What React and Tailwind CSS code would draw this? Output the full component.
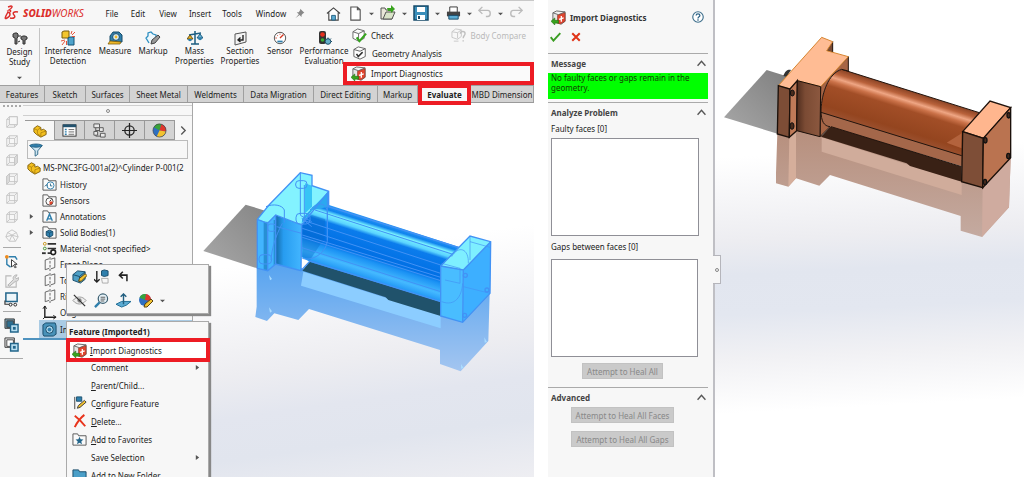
import React from "react";

function Icon({ size = 14, box = "0 0 16 16", children, className = "" }) {
  return (
    <svg width={size} height={size} viewBox={box} fill="none" aria-hidden="true" className={`shrink-0 ${className}`}>
      {children}
    </svg>
  );
}

/* ---------- icons ---------- */
const DesignStudy = () => (
  <Icon size={16}>
    <path d="M1 3l2-1h2l1 1v3L5 7v6H3V7L1 6zM9 6l2-1h2l2 1v2l-2 1v4h-2V9L9 8z" fill="#777" stroke="#333" />
    <path d="M6 5h3M8 10l-2 1" stroke="#333" />
  </Icon>
);
const Interference = () => (
  <Icon size={16}>
    <path d="M2 2l2-1h5v7H2z" fill="#f3c62d" stroke="#7b5c0b" />
    <path d="M8 8l2-1h4v8H8z" fill="#4fa3cb" stroke="#145274" />
    <path d="M11 4l1-3M12 5l3-3M12 6.500h3M5 10l-4 1M5 11l-3 4M6.500 11v4" stroke="#e5543c" />
  </Icon>
);
const Measure = () => (
  <Icon size={16}>
    <path d="M3 11V6l3-4h6l3 3v7z" fill="#2f7fac" stroke="#174b69" />
    <circle cx="9" cy="7" r="3.4" fill="#d8ecf5" stroke="#174b69" />
    <circle cx="9" cy="7" r="1.4" fill="#f0b928" />
    <path d="M1 14h12l1-2-11-1z" fill="#f0b928" stroke="#80600e" strokeWidth=".8" />
  </Icon>
);
const MarkupIcon = () => (
  <Icon size={16}>
    <path d="M4 13l-3-5 2-2V3l3-1 2 2 3 1v2" stroke="#2e8fc1" strokeWidth="1.3" fill="#edf7fc" />
    <path d="M6 14l1-4 6-5 2 2-5 6z" fill="#999" stroke="#444" />
  </Icon>
);
const Mass = () => (
  <Icon size={16}>
    <path d="M8 1v13M4 14h8M2 5l6-1 6-1" stroke="#1d5d81" strokeWidth="1.5" />
    <path d="M0 9h6L3 5z" fill="#e8b32a" stroke="#6c5210" />
    <path d="M10 8h6l-3-4z" fill="#6ab5da" stroke="#1d5d81" />
    <path d="M1 9c0 3 4 3 4 0M11 8c0 3 4 3 4 0" fill="#2f7fac" />
  </Icon>
);
const Section = () => (
  <Icon size={16}>
    <path d="M3 4l11-2v10L3 15z" fill="#f3f3f3" stroke="#555" />
    <path d="M6 10h5V5M8.500 7.500L6 10l2.500 2" stroke="#222" strokeWidth="1.400" />
  </Icon>
);
const Sensor = () => (
  <Icon size={14}>
    <circle cx="8" cy="8" r="6.500" fill="#fff" stroke="#444" />
    <path d="M8 8l4-4M3 8h1M8 3v1M5 5l.5.500" stroke="#d3341e" strokeWidth="1.500" />
    <path d="M5 11h6v2H5z" fill="#2f7fac" />
  </Icon>
);
const Performance = () => (
  <Icon size={16}>
    <rect x="3" y="1" width="7" height="13" rx="2" fill="#333" />
    <circle cx="6.500" cy="4.500" r="2.300" fill="#e5301e" />
    <circle cx="6.500" cy="10" r="1.800" fill="#38ae35" />
    <circle cx="12" cy="11.500" r="2.800" fill="#64aeca" stroke="#1c4f69" />
    <path d="M12 7.500v1.500M16 11.500h-1M15 8.500l-1 1" stroke="#1c4f69" />
  </Icon>
);
const Cube = ({ size = 14, color = "#c2c2c2", mode = 0 }) => (
  <Icon size={size}>
    {mode !== 6 && <path d="M5 2h9v9h-9zM2 5h9v9H2zM2 5l3-3M11 5l3-3M11 14l3-3M2 14l3-3" stroke={color} />}
    {mode === 0 && <path d="M5 2h9v9h-9z" fill="#f7f7f7" stroke={color} />}
    {mode === 2 && <path d="M11 5l3-3v9l-3 3z" fill="#ddd" stroke={color} />}
    {mode === 3 && <path d="M2 5l3-3v9l-3 3z" fill="#ddd" stroke={color} />}
    {mode === 6 && <path d="M8 1l5 3 2 5-3 5H5L1 9l2-5zM3 4l5 3 5-3M8 7l-3 7M8 7l4 7M1 9l7-2 7 2" stroke={color} />}
  </Icon>
);
const CheckCube = () => (
  <Icon size={15}>
    <path d="M1 4l5-3 7 2v8l-6 3-6-3zM1 4l6 2 6-3M7 6v8" fill="#fff" stroke="#666" />
    <path d="M5 10l3 4 7-8" stroke="#35a51d" strokeWidth="2.300" />
  </Icon>
);
const GeoCube = () => (
  <Icon size={14}>
    <path d="M1 4l5-3 8 2v9l-6 3-7-3zM1 4l7 2 6-3" fill="#fff" stroke="#555" />
    <path d="M4 9l2 3 5-5" stroke="#333" strokeWidth="1.800" />
  </Icon>
);
const CompareCube = () => (
  <Icon size={15}>
    <path d="M1 4l4-3 6 1v7l-4 3-6-2zM1 4l6 1 4-3M7 5v6M3 14h5" stroke="#c8c8c8" />
    <path d="M10 6c0-3 5-3 5 0 0 2-2 2-2 5M13 13v1.500" stroke="#c0c0c0" strokeWidth="1.500" />
  </Icon>
);
const ImportDiag = ({ size = 15 }) => (
  <Icon size={size}>
    <path d="M2 3l4-2 9 1v10l-4 3-9-3zM2 3l6 2 7-3" fill="#e6e6e6" stroke="#666" />
    <path d="M7 5.500l8-2.500v9l-5 3-3-1z" fill="#e2452f" stroke="#8c3a2c" strokeWidth=".7" />
    <path d="M11 6.500v6M8.500 10l5-1.500" stroke="#fff" strokeWidth="1.400" />
    <path d="M0 12l4-3.500V11h4v3H4v2z" fill="#38a31d" stroke="#1e6b10" strokeWidth=".6" />
  </Icon>
);
const Part = ({ size = 14 }) => (
  <Icon size={size}>
    <path d="M1 5l4-3 4 2v3l3-1 3 2v4l-6 3-5-3-3-3z" fill="#f3c01f" stroke="#7c5a08" />
    <path d="M1 5l4 2 4-3M5 7v4l4 3M9 10l6-2M9 10v4" stroke="#a3790d" strokeWidth=".8" />
  </Icon>
);
const PropIcon = () => (
  <Icon size={15}>
    <rect x="1" y="2" width="14" height="12" fill="#fff" stroke="#333" />
    <path d="M1 3h14" stroke="#22526e" strokeWidth="3" />
    <path d="M3 7h2M3 9.500h2M3 12h2" stroke="#2f7fac" strokeWidth="1.500" />
    <path d="M7 7h6M7 9.500h6M7 12h6" stroke="#666" />
  </Icon>
);
const ConfigIcon = () => (
  <Icon size={15}>
    <path d="M4 2v12h6M4 8h5" stroke="#555" />
    <path d="M2 1h6v4H2zM8 5h4v4H8zM9 11h5v4H9zM2 9h4v4H2z" fill="#e9e9e9" stroke="#555" />
  </Icon>
);
const Target = () => (
  <Icon size={15}>
    <circle cx="8" cy="8" r="5" stroke="#222" strokeWidth="1.300" />
    <path d="M8 0v16M0 8h16" stroke="#222" strokeWidth="1.300" />
  </Icon>
);
const Ball = ({ size = 15 }) => (
  <Icon size={size}>
    <circle cx="8" cy="8" r="7" fill="#2f6fc0" />
    <path d="M8 8L2 4.500A7 7 0 0 1 10 1.300z" fill="#3aa33a" />
    <path d="M8 8l2-6.700A7 7 0 0 1 14.800 9z" fill="#e0362a" />
    <path d="M8 8l6.800 1A7 7 0 0 1 5 14.300z" fill="#f2c230" />
    <circle cx="8" cy="8" r="7" stroke="#444" strokeWidth=".7" />
  </Icon>
);
const Funnel = () => (
  <Icon size={14}>
    <path d="M1 3l6 6v6l3-2V9l5-6z" fill="#cfe6f2" stroke="#235f80" />
    <ellipse cx="8" cy="3" rx="7" ry="1.800" fill="#2f7fac" stroke="#235f80" />
  </Icon>
);
const FolderBox = ({ children }) => (
  <Icon size={15}>
    <path d="M1 2h5l1 2h8v10H1z" fill="#fafafa" stroke="#555" />
    {children}
  </Icon>
);
const HistoryIcon = () => (
  <FolderBox>
    <circle cx="9" cy="9" r="3.800" fill="#fff" stroke="#2f7fac" />
    <path d="M9 7v2.500h2M3 10l2-2 1 2" stroke="#2f6b8b" />
  </FolderBox>
);
const SensorsIcon = () => (
  <FolderBox>
    <circle cx="8" cy="9" r="3.800" fill="#fff" stroke="#444" />
    <path d="M8 9l2-2" stroke="#222" />
    <path d="M8 9h3.500A3.500 3.500 0 0 1 8 12.500z" fill="#e0442a" />
  </FolderBox>
);
const AnnotIcon = () => (
  <FolderBox>
    <path d="M5 12.500L8 5.500l3 7M6 10.500h4" stroke="#2f7fac" strokeWidth="1.500" />
  </FolderBox>
);
const SolidIcon = () => (
  <FolderBox>
    <path d="M4.500 7L8 5.500 11.500 7v4L8 13l-3.500-2z" fill="#2f7fac" stroke="#174b69" />
    <path d="M4.500 7L8 8.500 11.500 7M8 8.500V13" stroke="#174b69" strokeWidth=".7" />
  </FolderBox>
);
const MaterialIcon = () => (
  <Icon size={15}>
    <circle cx="3" cy="3" r="1.500" stroke="#c89415" />
    <circle cx="3" cy="8" r="1.500" stroke="#3f8a2a" />
    <path d="M0 13h4" stroke="#333" strokeWidth="2" />
    <path d="M6 3h9M6 8h9M6 13h4" stroke="#333" strokeWidth="1.800" />
    <circle cx="12" cy="12" r="2.500" fill="#fff" stroke="#222" strokeWidth="1.700" />
  </Icon>
);
const PlaneIcon = () => (
  <Icon size={14}>
    <path d="M7 2L2.500 3.500v11L7 13M9 2.500L13.500 1v11L9 13.500" stroke="#555" />
    <path d="M8 0v16" stroke="#555" strokeDasharray="3 1.500" />
  </Icon>
);
const OriginIcon = () => (
  <Icon size={15}>
    <path d="M3 1v12h12" stroke="#222" strokeWidth="1.500" />
    <path d="M1 4l2-3 2 3M12 11l3 2-3 2M1 15l2-2" stroke="#222" />
  </Icon>
);
const ImportedIcon = () => (
  <Icon size={15}>
    <path d="M1 3l3-2h10l1 3v9l-3 2H2l-1-2z" fill="#4892b9" stroke="#174b69" />
    <circle cx="8" cy="8" r="4" fill="#a8d4ea" stroke="#174b69" />
    <circle cx="8" cy="8" r="2" fill="#2f7fac" />
  </Icon>
);
const SketchTool = () => (
  <Icon size={15}>
    <path d="M3 4v7l4 3M5 3h7l2 3" stroke="#2f7fac" strokeWidth="1.500" />
    <circle cx="3" cy="3" r="2" fill="#ef8b1d" />
    <path d="M8 6v8l2-2 2 3 1-1-2-3h3z" fill="#fff" stroke="#333" />
  </Icon>
);
const GreyTool = () => (
  <Icon size={15}>
    <path d="M13 9v6H2V3h6" stroke="#b9b9b9" strokeWidth="1.200" />
    <path d="M4 13l6-6c-1-3 1-5 4-5l-2 3 1 1 3-1c0 3-2 4-4 4l-6 5z" fill="#ddd" stroke="#b0b0b0" />
  </Icon>
);
const ViewTool = () => (
  <Icon size={15}>
    <path d="M2 1h12v9H2z" fill="#eef6fa" stroke="#23668b" strokeWidth="1.600" />
    <path d="M1 9v4h8" stroke="#333" strokeWidth="1.200" />
    <circle cx="7" cy="13.500" r="1.500" fill="#fff" stroke="#222" />
    <circle cx="12" cy="13.500" r="1.500" fill="#fff" stroke="#222" />
  </Icon>
);
const StackTool = ({ hollow }) => (
  <Icon size={15}>
    <path d="M1 1h10v10H1z" fill={hollow ? "#eee" : "#7fa6b8"} stroke="#333" />
    <path d="M3 3h7v7H3z" fill={hollow ? "#fff" : "#2f6f90"} stroke="#444" />
    <path d="M7 7h8v8H7z" fill="#b9dff1" stroke="#22658a" strokeWidth="1.500" />
    <path d="M9.500 9.500h3v3h-3z" fill="#22658a" />
  </Icon>
);
const EditFeature = () => (
  <Icon size={15}>
    <path d="M1 6l5-4 8 1v8l-5 4-8-3z" fill="#4e9fc6" stroke="#174b69" />
    <path d="M1 6l7 2 6-5M8 8v6" stroke="#174b69" />
    <path d="M7 13l1-3 6-5 2 2-6 6z" fill="#f2c230" stroke="#584211" />
  </Icon>
);
const Suppress = () => (
  <Icon size={15}>
    <path d="M3 2v12M0 11l3 3 3-3" stroke="#222" strokeWidth="1.500" />
    <path d="M8 2l3-1 4 1v5l-4 1-3-1z" fill="#2f7fac" stroke="#174b69" />
    <path d="M8 10h7v5H9z" stroke="#aaa" />
  </Icon>
);
const Rollback = () => (
  <Icon size={11}>
    <path d="M13 15V6H3M7 1L2 6l5 5" stroke="#222" strokeWidth="2.200" />
  </Icon>
);
const Hide = () => (
  <Icon size={15}>
    <path d="M1 8c4-5 10-5 14 0-4 5-10 5-14 0z" stroke="#999" fill="#eee" />
    <circle cx="8" cy="8" r="2.300" fill="#888" />
    <path d="M2 2l12 12" stroke="#333" strokeWidth="1.300" />
  </Icon>
);
const ZoomSel = () => (
  <Icon size={15}>
    <path d="M1 15l5-5" stroke="#2f7fac" strokeWidth="2.500" />
    <circle cx="9.500" cy="6" r="5" fill="#e8f4fa" stroke="#3b5e70" strokeWidth="1.300" />
    <path d="M7 4.500h5M7 6.500h5M7 8.500h4" stroke="#555" />
  </Icon>
);
const NormalTo = () => (
  <Icon size={15}>
    <path d="M0 12l6-3h10l-5 4-5 2z" fill="#5cacd3" stroke="#1d6a92" />
    <path d="M8 12V1M5 4l3-3 3 3" stroke="#235f80" strokeWidth="1.500" />
  </Icon>
);
const Appearance = () => (
  <Icon size={16}>
    <circle cx="7" cy="7" r="6" fill="#2f6fc0" />
    <path d="M7 7L1.500 4.500A6 6 0 0 1 8 1z" fill="#3aa33a" />
    <path d="M7 7l1-6a6 6 0 0 1 5 7z" fill="#e0362a" />
    <path d="M6 14l1-3 6-5 2 2-6 6z" fill="#f2c230" stroke="#584211" />
  </Icon>
);
const ConfigureFeature = () => (
  <Icon size={14}>
    <path d="M2 1v14" stroke="#333" />
    <path d="M4 1h6v5H4z" fill="#2f7fac" stroke="#174b69" />
    <path d="M5 14l1-3 7-6 2 2-7 6z" fill="#f2c230" stroke="#333" />
  </Icon>
);
const DeleteIcon = () => (
  <Icon size={14}>
    <path d="M2 2c4 3 8 7 12 12M13 1C9 4 5 9 2 15" stroke="#e8341c" strokeWidth="2.200" />
  </Icon>
);
const Favorite = () => (
  <FolderBox>
    <path d="M8 5l1.200 2.800 3 .2-2.300 2 .8 3L8 11.500 5.300 13l.8-3-2.300-2 3-.2z" fill="#23668b" />
  </FolderBox>
);
const NewFolder = () => (
  <Icon size={15}>
    <path d="M1 2h6l1 2h7v11H1z" fill="#4b9fc8" stroke="#174b69" />
  </Icon>
);
const Chevron = ({ dir = "up", size = 9 }) => (
  <Icon size={size}>
    <path d={dir === "up" ? "M1 12l7-8 7 8" : "M4 1l7 7-7 7"} stroke="#555" strokeWidth="2.400" />
  </Icon>
);
const Caret = ({ dir = "down" }) => (
  <svg width="5" height="5" viewBox="0 0 6 6" aria-hidden="true" className="shrink-0">
    <path d={dir === "down" ? "M0 2h6L3 5z" : "M1 0v6l4-3z"} fill="#555" />
  </svg>
);

/* ---------- model drawings ---------- */
function BlueModel() {
  return (
    <svg width="310" height="220" viewBox="0 0 930 660" className="shrink-0" role="img" aria-label="Imported cylinder, selected">
      <defs>
        <linearGradient id="bShadow" x1="1" y1="0" x2="0" y2="1">
          <stop offset="0" stopColor="#868686" />
          <stop offset="1" stopColor="#a8a8a8" />
        </linearGradient>
        <linearGradient id="bRef" x1="0" y1="0" x2="0" y2="1">
          <stop offset="0" stopColor="#55a3f0" />
          <stop offset="1" stopColor="#a3c5f0" />
        </linearGradient>
        <linearGradient id="bBody" gradientUnits="userSpaceOnUse" x1="590" y1="190" x2="535" y2="365">
          <stop offset="0" stopColor="#2e9df5" />
          <stop offset=".1" stopColor="#0f83ee" />
          <stop offset=".16" stopColor="#78f0ff" />
          <stop offset=".24" stopColor="#5bd4ff" />
          <stop offset=".3" stopColor="#0b7cec" />
          <stop offset=".62" stopColor="#006fe4" />
          <stop offset=".7" stopColor="#1b92f4" />
          <stop offset=".86" stopColor="#45b9ff" />
          <stop offset="1" stopColor="#1c93f4" />
        </linearGradient>
        <linearGradient id="bFront" x1="0" y1="0" x2="1" y2="0">
          <stop offset="0" stopColor="#156aa8" />
          <stop offset=".3" stopColor="#279cf0" />
          <stop offset="1" stopColor="#43b6ff" />
        </linearGradient>
      </defs>
      <path d="M25 273L152 134L210 152L187 325z" fill="url(#bShadow)" />
      <path d="M185 325V440L181 471L216 483L238 460L310 480L342 447L735 570V612L797 634L880 543L884 400L800 480L735 465L320 325L242 305z" fill="url(#bRef)" />
      <path d="M325 335L737 466V505L318 377z" fill="#8ccdff" />
      <path d="M322 332L345 303L737 425V468L580 420L572 412z" fill="#20526b" />
      <path d="M318 180L360 135L402 135L795 262L737 425L345 306L318 290z" fill="url(#bBody)" />
      <path d="M350 165L390 178L388 235L345 300L322 290V195z" fill="#0869c9" opacity=".4" />
      <path d="M187 178L222 135L316 38L351 46V77L401 94V128L350 152L318 195L245 165L218 190z" fill="#83f3ff" />
      <path d="M187 178L218 188L242 165V312L218 332L187 325z" fill="#42b5ff" />
      <path d="M242 165L320 195L318 332L242 312z" fill="url(#bFront)" />
      <path d="M401 94V140L352 150L320 190L322 175z" fill="#2ba8f0" />
      <path d="M330 70L351 77V140L330 160z" fill="#37c4f5" />
      <path d="M206 185H218V330H206zM236 180H245V315H236z" fill="#1577b7" opacity=".6" />
      <g stroke="#4292f5" strokeWidth="3" fill="none">
        <path d="M187 178L222 135L316 38L351 46V77L401 94V140L795 264M187 178V325L218 332L242 312L318 332L345 303L737 425M218 190V332M242 165V312M320 195L318 332M187 178L218 190L242 165L320 195L401 94" strokeWidth="4" />
        <path d="M322 180L737 315M322 205L737 340M322 225L737 352M322 232L737 362M318 262L737 395M360 150L780 285" />
        <path d="M345 150C370 120 400 130 397 165V240C395 280 350 305 322 295M262 190C240 230 230 270 228 300M213 140C235 130 262 135 268 150V188M316 38V165M328 75V185M397 100V240" />
        <rect x="302" y="62" width="34" height="23" rx="10" />
        <rect x="303" y="160" width="42" height="32" rx="12" />
        <rect x="192" y="284" width="38" height="28" rx="12" />
        <rect x="218" y="192" width="24" height="22" rx="8" />
        <path d="M316 166L350 185M320 175L350 200M245 200L320 220" />
      </g>
      <path d="M737 318L825 228L887 245L805 330z" fill="#7eefff" />
      <path d="M737 318L805 330L803 487L737 468z" fill="#49bdff" />
      <path d="M805 330L887 245L885 400L803 487z" fill="#3dafff" />
      <g stroke="#4292f5" strokeWidth="4" fill="none">
        <path d="M737 318L825 228L887 245L885 400L803 487L737 468zM737 318L805 330L887 245M805 330L803 487" />
        <path d="M825 228V300M770 290C790 255 822 265 820 310M740 425C780 440 800 410 803 370M740 310L795 325V370L750 360M825 245L885 262M805 380L885 400" strokeWidth="2" />
        <circle cx="811" cy="346" r="6" />
        <circle cx="876" cy="390" r="6" />
        <circle cx="809" cy="466" r="6" />
      </g>
      <path d="M222 345l9 12-6 4zM222 442l9 12-6 4zM868 532l8 14-7 2zM798 612l8 12-8 2z" fill="#a9dcff" />
    </svg>
  );
}

function CopperModel() {
  return (
    <svg width="304" height="220" viewBox="0 0 912 660" className="shrink-0" role="img" aria-label="Cylinder assembly">
      <defs>
        <linearGradient id="cShadow" x1="1" y1="0" x2="0" y2="1">
          <stop offset="0" stopColor="#7f7f7f" />
          <stop offset="1" stopColor="#a8a8a8" />
        </linearGradient>
        <linearGradient id="cRef" x1="0" y1="0" x2="0" y2="1">
          <stop offset="0" stopColor="#b78f7d" />
          <stop offset="1" stopColor="#c4aaa0" />
        </linearGradient>
        <linearGradient id="cBody" gradientUnits="userSpaceOnUse" x1="575" y1="185" x2="525" y2="345">
          <stop offset="0" stopColor="#8d4526" />
          <stop offset=".1" stopColor="#b9623b" />
          <stop offset=".18" stopColor="#efa684" />
          <stop offset=".25" stopColor="#cb7249" />
          <stop offset=".34" stopColor="#a24e27" />
          <stop offset=".7" stopColor="#94451f" />
          <stop offset=".86" stopColor="#9c5231" />
          <stop offset="1" stopColor="#b36e4d" />
        </linearGradient>
        <linearGradient id="cFront" x1="0" y1="0" x2="1" y2="0">
          <stop offset="0" stopColor="#4f2d1e" />
          <stop offset=".35" stopColor="#7b4b34" />
          <stop offset="1" stopColor="#8c583f" />
        </linearGradient>
      </defs>
      <path d="M12 262L140 120L205 140L175 312z" fill="url(#cShadow)" />
      <path d="M172 310L168 430V460L205 470L228 445L298 467L330 435L722 558V602L786 621L867 532L872 380L788 470L725 450L305 315L230 300z" fill="url(#cRef)" />
      <path d="M305 322L725 455V495L305 365z" fill="#d0ac9b" />
      <path d="M208 322L228 308V445L205 470z" fill="#d5ae9b" />
      <path d="M788 473L872 385L867 532L786 621z" fill="#cfab9f" />
      <path d="M303 320L333 288L725 410V455L570 408L560 400z" fill="#392115" />
      <path d="M190 138C195 122 205 117 213 120L200 140z" fill="#333" />
      <path d="M365 118L778 248L725 408L333 290C305 288 300 270 303 240C305 190 325 130 365 118z" fill="url(#cBody)" />
      <path d="M303 247L725 377V408L333 290C312 288 303 275 303 247z" fill="#a4674a" />
      <path d="M725 310V355L680 338z" fill="#b3633d" />
      <path d="M365 118L778 248M303 247L725 377M333 290L725 410" stroke="#22140d" strokeWidth="3" fill="none" />
      <path d="M302 170L385 80V123L365 118C325 130 305 190 303 240C303 275 312 288 330 290L300 320z" fill="#a76545" stroke="#22140d" strokeWidth="3" />
      <path d="M320 62L338 35V66z" fill="#7b4b34" stroke="#22140d" strokeWidth="3" />
      <path d="M175 167L305 22L338 35L320 62L385 80L302 170L232 152L210 177z" fill="#ffbc94" stroke="#d78631" strokeWidth="3" />
      <path d="M175 167L210 177L208 322L172 312z" fill="#7d4d36" stroke="#1b100a" strokeWidth="4" />
      <path d="M210 177L232 152L230 302L208 322z" fill="#bf7a58" stroke="#1b100a" strokeWidth="4" />
      <path d="M232 152L302 170L300 320L230 302z" fill="url(#cFront)" stroke="#1b100a" strokeWidth="3" />
      <ellipse cx="217" cy="189" rx="6" ry="9" fill="#4a2b1c" stroke="#111" strokeWidth="3" />
      <ellipse cx="216" cy="288" rx="6" ry="10" fill="#4a2b1c" stroke="#111" strokeWidth="3" />
      <path d="M728 305L810 213L872 233L790 325z" fill="#ffb68e" stroke="#22140d" strokeWidth="4" />
      <path d="M728 305L790 325L788 473L725 455z" fill="#7e4e37" stroke="#1b100a" strokeWidth="4" />
      <path d="M790 325L872 233V383L788 473z" fill="#ba7350" stroke="#1b100a" strokeWidth="4" />
      <g fill="#4a2b1c" stroke="#111" strokeWidth="4">
        <ellipse cx="866" cy="256" rx="5" ry="8" />
        <ellipse cx="796" cy="331" rx="5" ry="8" />
        <ellipse cx="865" cy="378" rx="5" ry="8" />
        <ellipse cx="795" cy="456" rx="5" ry="8" />
      </g>
    </svg>
  );
}

/* ---------- left window ---------- */
const iconButton = "flex items-center justify-center";

function MenuBar() {
  return (
    <header className="flex h-[26px] shrink-0 items-center border-b border-t border-[#c8c8c8]">
      <div className="flex w-[100px] shrink-0 items-center gap-1 pl-1 text-[#dc2f2c]">
        <svg width="15" height="16" viewBox="0 0 15 16" fill="none" stroke="#dc2f2c" aria-hidden="true">
          <path d="M4 2l3-1c2 0 1 2-2 4 2 0 2 1 1 2M4 7C0 14 1 14 3 13c4-2 4-6 0-6M14 7c-4-1-6 1-4 3s0 4-4 3" strokeWidth="1.500" />
        </svg>
        <span className="text-[10px] italic leading-none">
          <b className="font-extrabold">SOLID</b>WORKS
        </span>
      </div>
      <nav className="flex shrink-0 items-center text-center">
        {[
          ["File", "w-6"],
          ["Edit", "w-7"],
          ["View", "w-8"],
          ["Insert", "w-8"],
          ["Tools", "w-8"],
          ["Window", "w-[46px]"],
        ].map(([t, w]) => (
          <button key={t} className={`${w} text-center`}>{t}</button>
        ))}
      </nav>
      <button aria-label="Pin" className="w-3">
        <Icon size={11}>
          <path d="M9 1l6 6-2 1-2 2v3l-3-3-6 5 5-6-3-3h3l2-3z" fill="#888" />
        </Icon>
      </button>
      <div className="ml-5 flex min-w-0 items-center gap-[6px] overflow-hidden">
        <button aria-label="Home" className="mr-px">
          <Icon size={15}>
            <path d="M1 8l7-6 7 6M3 7v8h10V7" fill="#fff" stroke="#444" strokeWidth="1.200" />
            <path d="M6 15v-5h4v5z" fill="#5cacd3" stroke="#235f80" />
          </Icon>
        </button>
        <button aria-label="New" className="flex items-center gap-[6px]">
          <Icon size={15}><path d="M3 1h7l3 3v11H3zM10 1v3h3" fill="#fff" stroke="#555" strokeWidth="1.200" /></Icon>
          <Caret />
        </button>
        <button aria-label="Open" className="flex items-center gap-[6px]">
          <Icon size={16}>
            <path d="M1 3h4l1 2h6v9H1z" fill="#e9e6d8" stroke="#555" />
            <path d="M3 14l3-7h9l-3 7z" fill="#d9e3c8" stroke="#555" />
            <path d="M7 3h4V0l4 4-4 4V6H8z" fill="#38a31d" />
          </Icon>
          <Caret />
        </button>
        <button aria-label="Save" className="flex items-center gap-[6px]">
          <Icon size={16}>
            <path d="M1 1h14v14H1z" fill="#3a8fbb" stroke="#174b69" strokeWidth="1.500" />
            <path d="M4 2h8v5H4zM4 10h8v5H4z" fill="#fff" />
            <path d="M5 11h2v3H5z" fill="#174b69" />
          </Icon>
          <Caret />
        </button>
        <button aria-label="Print" className="flex items-center gap-[6px]">
          <Icon size={15}>
            <path d="M4 1h8v6H4z" fill="#fff" stroke="#333" />
            <path d="M1 6h14v5H1z" fill="#444" />
            <path d="M3 10h10v4H3z" fill="#5cacd3" stroke="#174b69" />
          </Icon>
          <Caret />
        </button>
        <button aria-label="Undo" className="flex items-center gap-[6px]">
          <Icon size={14}><path d="M1 5h10c4 0 4 7 0 7H9M5 1L1 5l4 4" stroke="#bbb" strokeWidth="1.600" /></Icon>
          <Caret />
        </button>
        <button aria-label="Redo">
          <Icon size={14}><path d="M15 5H5c-4 0-4 7 0 7h2M11 1l4 4-4 4" stroke="#bbb" strokeWidth="1.600" /></Icon>
        </button>
      </div>
    </header>
  );
}

const ribbon = [
  ["Interference", "Detection", Interference, "w-14"],
  ["Measure", "", Measure, "w-[38px]"],
  ["Markup", "", MarkupIcon, "w-[38px]"],
  ["Mass", "Properties", Mass, "w-[45px]"],
  ["Section", "Properties", Section, "w-[46px]"],
  ["Sensor", "", Sensor, "w-[34px]"],
  ["Performance", "Evaluation", Performance, "w-[54px]"],
];

function Ribbon() {
  return (
    <section className="flex h-[59px] shrink-0 pt-[2px]">
      <button className="flex w-10 shrink-0 flex-col items-center border-r border-[#c4c4c4] pt-[3px] leading-[10px]">
        <DesignStudy />
        <span>Design<br />Study</span>
        <span className="mt-2"><Caret /></span>
      </button>
      {ribbon.map(([a, b, I, w]) => (
        <button key={a} className={`${w} flex shrink-0 flex-col items-center pt-[2px] leading-[10px]`}>
          <span className="flex h-4 items-center"><I /></span>
          <span className="text-center">{a}{b && <><br />{b}</>}</span>
        </button>
      ))}
      <div className="flex min-w-0 flex-1 flex-col">
        <div className="flex h-4 items-center justify-between gap-2">
          <button className="flex items-center gap-1 pl-px"><CheckCube />Check</button>
          <button disabled className="flex items-center gap-1 pr-2 text-[#b9b9b9]"><CompareCube />Body Compare</button>
        </div>
        <button className="flex h-[21px] items-center gap-[5px] pl-[2px]"><GeoCube />Geometry Analysis</button>
        <button className="z-10 -ml-2 -mt-px flex h-[23px] shrink-0 items-center gap-[5px] border-4 border-[#ed1c24] bg-[#fafafa] pl-1">
          <ImportDiag />Import Diagnostics
        </button>
      </div>
    </section>
  );
}

const tabs = [
  ["Features", "w-[45px]"],
  ["Sketch", "w-[41px]"],
  ["Surfaces", "w-11"],
  ["Sheet Metal", "w-[58px]"],
  ["Weldments", "w-14"],
  ["Data Migration", "w-[70px]"],
  ["Direct Editing", "w-16"],
  ["Markup", "w-10"],
  ["Evaluate", "w-[53px]"],
  ["MBD Dimension", "w-[63px]"],
];

function TabBar() {
  return (
    <nav className="flex h-[18px] shrink-0 border-b border-[#9a9a9a] bg-[#d3d3d3]">
      <div className="flex min-w-0 flex-1">
        {tabs.map(([t, w]) =>
          t === "Evaluate" ? (
            <button key={t} className={`${w} z-10 -mt-px h-[21px] shrink-0 border-4 border-[#ed1c24] bg-[#f7f7f7] font-bold leading-[13px]`}>{t}</button>
          ) : (
            <button key={t} className={`${w} shrink-0 whitespace-nowrap border-r border-t border-[#9f9f9f] text-center`}>{t}</button>
          )
        )}
      </div>
    </nav>
  );
}

function SideTools() {
  return (
    <aside className="flex w-[23px] shrink-0 flex-col items-center">
      <div className="mt-[2px] w-[18px] border-t-2 border-dotted border-[#aaa]" />
      <div className="mt-[5px] flex flex-col">
        {[0, 1, 2, 3, 4, 5, 6].map((m) => (
          <button key={m} aria-label={`View orientation ${m + 1}`} className="flex h-[19px] items-center"><Cube mode={m} /></button>
        ))}
      </div>
      <hr className="mb-1 mt-[2px] w-[18px] border-[#aaa]" />
      <button aria-label="Sketch" className="flex h-[19px] items-center"><SketchTool /></button>
      <button aria-label="Repair" className="flex h-[19px] items-center"><GreyTool /></button>
      <button aria-label="View" className="flex h-[19px] items-center"><ViewTool /></button>
      <hr className="mb-1 mt-[2px] w-[18px] border-[#aaa]" />
      <button aria-label="Front stack" className="flex h-[19px] items-center"><StackTool /></button>
      <button aria-label="Back stack" className="flex h-[19px] items-center"><StackTool hollow /></button>
      <hr className="mt-1 w-full border-[#aaa]" />
    </aside>
  );
}

const tree = [
  ["History", HistoryIcon],
  ["Sensors", SensorsIcon],
  ["Annotations", AnnotIcon, true],
  ["Solid Bodies(1)", SolidIcon, true],
  ["Material <not specified>", MaterialIcon],
  ["Front Plane", PlaneIcon],
  ["Top Plane", PlaneIcon],
  ["Right Plane", PlaneIcon],
  ["Origin", OriginIcon],
];

function FeatureTree() {
  return (
    <aside className="flex w-[170px] shrink-0 flex-col border-r border-[#a8a8a8]">
      <div className="mt-[2px] flex h-[11px] items-center justify-center border-b border-t border-[#cfcfcf]">
        <span className="size-1 rounded-full border border-[#888]" />
      </div>
      <div className="mt-1 flex h-5 pl-[2px]">
        {[Part, PropIcon, ConfigIcon, Target, Ball].map((I, i) => (
          <button key={i} aria-label={`Manager tab ${i + 1}`} className={`${iconButton} w-[30px] border-r border-t border-[#999] ${i ? "border-b bg-[#d3d3d3]" : "bg-[#f7f7f7]"}`}>
            <I />
          </button>
        ))}
        <button aria-label="More tabs" className={`${iconButton} flex-1`}><Chevron dir="right" /></button>
      </div>
      <button aria-label="Filter" className="mx-1 flex h-[19px] items-center border border-[#bbb] pl-px"><Funnel /></button>
      <div className="flex h-[17px] items-center gap-[2px] whitespace-nowrap pl-1">
        <Part />MS-PNC3FG-001a(2)^Cylinder P-001(2
      </div>
      <ul>
        {tree.map(([t, I, open]) => (
          <li key={t} className="flex h-4 items-center gap-[3px] pl-[6px]">
            <span className="w-[10px]">{open && <Caret dir="right" />}</span>
            <span className="flex w-[15px] justify-center"><I /></span>
            {t}
          </li>
        ))}
        <li className="flex h-5 items-center gap-[3px] border-b-2 border-[#4f93bf] pl-[16px]">
          <span className="flex h-full flex-1 items-center gap-[3px] bg-[#a9cbe4] pl-[3px]"><ImportedIcon />Imported1</span>
        </li>
      </ul>
    </aside>
  );
}

const menu = [
  [<>Comment</>, null, true, "comment"],
  [<><u>P</u>arent/Child...</>, null, false, "parent"],
  [<>C<u>o</u>nfigure Feature</>, ConfigureFeature, false, "configure"],
  [<><u>D</u>elete...</>, DeleteIcon, false, "delete"],
  [<><u>A</u>dd to Favorites</>, Favorite, false, "favorites"],
  [<>Save Selection</>, null, true, "save"],
  [<><u>A</u>dd to New Folder</>, NewFolder, false, "folder"],
];

function ContextMenus() {
  return (
    <>
      <div className="absolute left-[66px] top-[161px] flex h-[50px] w-[143px] flex-col justify-around border border-[#aaa] bg-[#f7f7f7] pl-[5px] shadow-[2px_2px_1px_#888]">
        <div className="flex items-center gap-[7px]">
          <button aria-label="Edit feature"><EditFeature /></button>
          <button aria-label="Suppress"><Suppress /></button>
          <button aria-label="Roll back" className="pl-[2px]"><Rollback /></button>
        </div>
        <div className="flex items-center gap-[7px]">
          <button aria-label="Hide"><Hide /></button>
          <button aria-label="Zoom to selection"><ZoomSel /></button>
          <button aria-label="Normal to"><NormalTo /></button>
          <button aria-label="Appearances" className="flex items-center gap-[6px]"><Appearance /><Caret /></button>
        </div>
      </div>
      <div className="absolute left-[66px] top-[218px] w-[143px] border border-[#aaa] bg-[#f7f7f7] shadow-[2px_2px_1px_#888]">
        <div className="h-4 pl-[2px] pt-1 font-bold">Feature (Imported1)</div>
        <button className="relative -mx-px -mb-1 flex h-6 w-[144px] items-center gap-[3px] border-4 border-[#ed1c24] bg-white pl-[2px]">
          <ImportDiag /><span><u>I</u>mport Diagnostics</span>
        </button>
        {menu.map(([label, I, sub, key]) => (
          <button key={key} className="flex h-[18px] w-full items-center gap-1 pl-[5px] pr-2">
            <span className="flex w-[15px] justify-center">{I && <I />}</span>
            <span className="flex-1 text-left">{label}</span>
            {sub && <Caret dir="right" />}
          </button>
        ))}
      </div>
    </>
  );
}

function ModelWindow() {
  return (
    <main className="flex min-w-0 flex-col overflow-hidden bg-[#f7f7f7]">
      <MenuBar />
      <Ribbon />
      <TabBar />
      <div className="relative flex min-h-0 flex-1">
        <SideTools />
        <FeatureTree />
        <div className="min-w-0 flex-1 overflow-hidden bg-[linear-gradient(172deg,#fff_40%,#ededf1_66%,#e3e6ef_76%,#e1e5ee_86%,#eeeef2_100%)] pl-[2px] pt-[57px]">
          <BlueModel />
        </div>
        <ContextMenus />
      </div>
    </main>
  );
}

/* ---------- right window ---------- */
function Heading({ children }) {
  return (
    <div className="flex h-5 items-center justify-between border-t border-[#aaa] pl-[3px] pr-[2px] font-bold text-[#444]">
      {children}
      <button aria-label="Collapse"><Chevron /></button>
    </div>
  );
}
const healButton = "block h-4 border border-[#c2c2c2] bg-[#cacaca] text-[#888]";
const listBox = "mx-[3px] block appearance-none overflow-hidden border border-[#8f8f96] bg-white";

function DiagnosticsPanel() {
  return (
    <section className="relative flex w-[167px] shrink-0 flex-col border-r-2 border-[#bfbfc4] bg-[#f7f7f7] pr-[5px]">
      <div className="flex h-[25px] items-end gap-1 pl-[3px]">
        <ImportDiag />
        <h1 className="flex-1 font-bold leading-[14px] text-[#333]">Import Diagnostics</h1>
        <button aria-label="Help" className="mb-[2px] mr-1">
          <Icon size={12}>
            <circle cx="8" cy="8" r="7" fill="#fff" stroke="#3e6f8c" strokeWidth="1.500" />
            <path d="M5.500 6c0-3 5-3 5 0 0 2-2.500 1.500-2.500 4M8 11v2" stroke="#2c6286" strokeWidth="1.700" />
          </Icon>
        </button>
      </div>
      <div className="flex h-7 items-center gap-[10px] pb-[5px] pl-[2px]">
        <button aria-label="OK"><Icon size={11}><path d="M1 9l4 5L15 3" stroke="#3a9d22" strokeWidth="2.800" /></Icon></button>
        <button aria-label="Cancel"><Icon size={10}><path d="M2 2l12 12M14 2L2 14" stroke="#e03418" strokeWidth="3.200" /></Icon></button>
      </div>
      <Heading>Message</Heading>
      <p className="mb-[3px] h-[26px] bg-[#00ff00] px-[3px] leading-[10px] text-[#123b00]">No faulty faces or gaps remain in the geometry.</p>
      <Heading>Analyze Problem</Heading>
      <label htmlFor="faulty" className="pl-[3px] leading-[13px]">Faulty faces [0]</label>
      <select id="faulty" multiple className={`${listBox} mt-[3px] h-[98px] w-[148px]`} />
      <label htmlFor="gaps" className="mt-1 pl-[3px] leading-[13px]">Gaps between faces [0]</label>
      <select id="gaps" multiple className={`${listBox} mt-[6px] h-[98px] w-[147px]`} />
      <button disabled className={`${healButton} mb-2 ml-[34px] mt-[6px] w-[81px]`}>Attempt to Heal All</button>
      <Heading>Advanced</Heading>
      <button disabled className={`${healButton} ml-[23px] w-[103px]`}>Attempt to Heal All Faces</button>
      <button disabled className={`${healButton} ml-[23px] mt-2 w-[103px]`}>Attempt to Heal All Gaps</button>
      <button aria-label="Resize panel" className="absolute -right-2 top-[255px] flex h-[29px] w-2 items-center justify-center border border-l-0 border-[#b5b5bb] bg-[#f7f7f7]">
        <span className="size-1 rounded-full border border-[#888]" />
      </button>
    </section>
  );
}

export default function App() {
  return (
    <div className="grid h-screen grid-cols-[534fr_14fr_476fr] overflow-hidden bg-white font-['Noto_Sans','Open_Sans',sans-serif] text-[8px] leading-[11px] text-[#222]">
      <ModelWindow />
      <div />
      <div className="flex min-w-0 overflow-hidden">
        <DiagnosticsPanel />
        <div className="min-w-0 flex-1 bg-[linear-gradient(177deg,#fff_32%,#ededf1_49%,#e2e6ef_56%,#e3e7f0_64%,#f1f1f4_73%,#fff_84%)] pl-[5px] pt-[30px]">
          <CopperModel />
        </div>
      </div>
    </div>
  );
}
